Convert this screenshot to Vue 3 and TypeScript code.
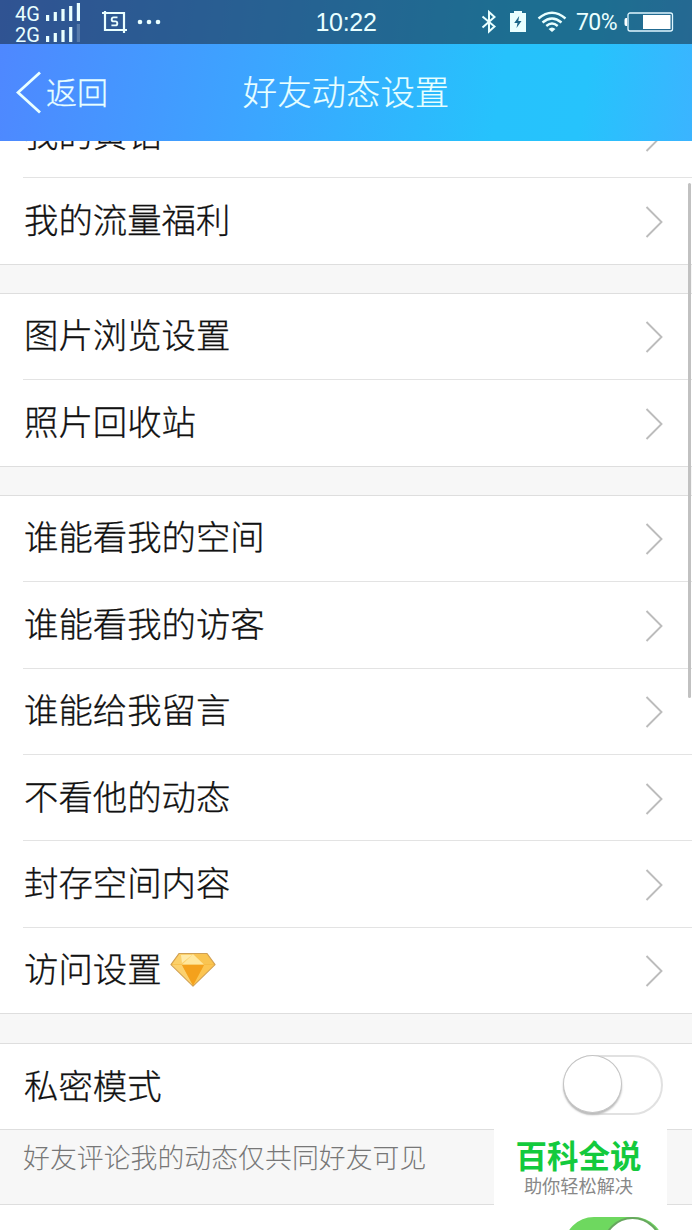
<script setup lang="ts">
interface Item { label: string; gem?: boolean }

const groups: Item[][] = [
  [{ label: '我的黄钻' }, { label: '我的流量福利' }],
  [{ label: '图片浏览设置' }, { label: '照片回收站' }],
  [
    { label: '谁能看我的空间' },
    { label: '谁能看我的访客' },
    { label: '谁能给我留言' },
    { label: '不看他的动态' },
    { label: '封存空间内容' },
    { label: '访问设置', gem: true },
  ],
]
const bars = [6, 9, 12, 15, 18]
</script>

<template>
  <div class="screen">
    <header class="top">
      <div class="status">
        <div class="networks">
          <div class="network">
            <span>4G</span>
            <svg width="35" height="19" viewBox="0 0 35 19"><rect v-for="(h, i) in bars" :key="h" :x="i * 7.7" :y="19 - h" width="3.2" :height="h" fill="#e9ffff" /></svg>
          </div>
          <div class="network">
            <span>2G</span>
            <svg width="35" height="19" viewBox="0 0 35 19"><rect v-for="(h, i) in bars" :key="h" :x="i * 7.7" :y="19 - h" width="3.2" :height="h" fill="#e9ffff" :opacity="i === 4 ? 0.22 : 1" /></svg>
          </div>
        </div>
        <svg class="shot" width="26" height="24" viewBox="0 0 26 24" fill="none" stroke="#e9ffff" stroke-width="2.2">
          <path d="M1 3H23V23M4 1V20H26" />
          <path d="M16.5 7.4H12.7Q10.7 7.4 10.7 9.4T12.7 11.4H14.4Q16.3 11.4 16.3 13.4T14.3 15.4H10.4" stroke-width="1.9" />
        </svg>
        <svg class="dots" width="24" height="6" viewBox="0 0 24 6" fill="#e9ffff"><circle cx="3" cy="3" r="2.3" /><circle cx="12" cy="3" r="2.3" /><circle cx="21" cy="3" r="2.3" /></svg>
        <span class="clock">10:22</span>
        <div class="indicators">
          <svg class="bt" width="16" height="26" viewBox="0 0 16 26" fill="none" stroke="#e9ffff" stroke-width="2"><path d="M1.5 7.5L13.5 17.5L8 22.5V3L13.5 8L1.5 18.5" /></svg>
          <svg class="charge" width="16" height="22" viewBox="0 0 16 22"><path d="M0 2H4V0H12V2H16V21H0Z" fill="#e9ffff" /><path d="M9.2 5L4.2 12H7.5L6.5 17L11.5 10H8.3Z" fill="#1c6688" /></svg>
          <svg class="wifi" width="30" height="22" viewBox="0 0 30 22" fill="none" stroke="#e9ffff" stroke-width="2.4"><path d="M1.5 7.5Q15-4 28.5 7.5M5.5 11.5Q15 3.5 24.5 11.5M9.3 15Q15 10.2 20.7 15" /><path d="M11.5 18Q15 15 18.5 18L15 21Z" fill="#e9ffff" stroke="none" /></svg>
          <span class="percent">70%</span>
          <svg class="battery" width="50" height="20" viewBox="0 0 50 20"><rect x="4" y="1" width="44.5" height="18" rx="2" fill="none" stroke="#dff6ff" stroke-width="1.3" /><path d="M3 6H2Q.5 6 .5 8V12Q.5 14 2 14H3Z" fill="#fff" /><rect x="19" y="3" width="27.5" height="14" fill="#fff" /></svg>
        </div>
      </div>
      <div class="nav">
        <svg class="back-arrow" width="26" height="43" viewBox="0 0 26 43"><path d="M24 1.5L2 21.5L24 41.5" fill="none" stroke="#e9ffff" stroke-width="2.8" /></svg>
        <span class="back">返回</span>
        <h1 class="title">好友动态设置</h1>
      </div>
    </header>

    <main class="content">
      <section v-for="(group, g) in groups" :key="g" class="group" :class="{ first: g === 0, second: g === 1 }">
        <div v-for="item in group" :key="item.label" class="row">
          <span class="label">{{ item.label }}</span>
          <svg v-if="item.gem" class="gem" width="46" height="36" viewBox="0 0 46 36">
            <path d="M9 1.5H37L45 12.5L23 34L1 12.5Z" fill="#f5b53a" stroke="#cfa055" stroke-width="1.2" stroke-linejoin="round" />
            <path d="M9.5 2L2 12.5H12L23 2Z" fill="#fbd06a" />
            <path d="M36.5 2L44 12.5H34L23 2Z" fill="#f9c451" />
            <path d="M23 2L12 12.5H34Z" fill="#ffe79d" />
            <path d="M11 3H22L12 11Z" fill="#ffeaa8" />
            <path d="M2 13L23 33.5L12 13Z" fill="#fbd16f" />
            <path d="M44 13L23 33.5L34 13Z" fill="#fcc552" />
            <path d="M12 13H34L23 33.5Z" fill="#f4a11c" />
          </svg>
          <svg class="chevron" width="19" height="34" viewBox="0 0 19 34"><path d="M1.5 2L16.5 17L1.5 32" fill="none" stroke="#bcbcbc" stroke-width="1.9" /></svg>
        </div>
      </section>
      <section class="group private">
        <div class="row">
          <span class="label">私密模式</span>
          <span class="switch"><i class="knob"></i></span>
        </div>
      </section>
      <p class="note">好友评论我的动态仅共同好友可见</p>
      <section class="group last">
        <div class="row">
          <span class="label">接收好友动态通知</span>
          <span class="switch on"><i class="knob"></i></span>
        </div>
      </section>
    </main>

    <i class="scrollbar"></i>
    <aside class="brand">
      <strong>百科全说</strong>
      <span>助你轻松解决</span>
    </aside>
  </div>
</template>

<style>
html, body { margin: 0; overflow: hidden; }
</style>

<style scoped>
.screen { position: relative; display: flex; flex-direction: column; width: 692px; height: 1230px; overflow: hidden; background: #f7f7f7; font-family: "Liberation Sans", "Noto Sans CJK SC", sans-serif; font-weight: 300; color: #111; }
svg { display: block; flex: none; }
.top { flex: none; height: 141px; background: linear-gradient(99deg, #4f87ff 0%, #3ba6ff 39%, #26c2fc 72%, #26c3fc 84%, #3bb4ff 100%); color: #e9ffff; }
.status { position: relative; display: flex; align-items: center; height: 44px; background: rgba(22, 38, 53, .54); }
.networks { width: 85px; height: 44px; padding-left: 15px; box-sizing: border-box; }
.network { display: flex; align-items: flex-end; gap: 7px; height: 21px; font: 20px/20px Roboto, "Liberation Sans", sans-serif; }
.network span { width: 24px; height: 17px; }
.shot { margin-left: 16px; }
.dots { margin-left: 10px; }
.clock { position: absolute; left: 0; right: 0; top: 8px; text-align: center; font: 25px/28px "Liberation Sans", sans-serif; letter-spacing: -.3px; }
.indicators { display: flex; align-items: center; margin-left: auto; padding-right: 18px; }
.charge { margin-left: 13px; }
.wifi { margin-left: 11px; }
.percent { width: 42px; margin: 2px 6px 0 9px; font: 400 23px/26px Roboto, sans-serif; letter-spacing: -.6px; white-space: nowrap; }
.nav { position: relative; display: flex; align-items: center; height: 97px; padding-left: 16px; }
.back { margin: 0 0 4px 4px; font: 300 31px/44px "Noto Sans CJK SC", sans-serif; -webkit-text-stroke: .3px currentColor; }
.title { position: absolute; left: 0; right: 0; top: 21px; margin: 0; text-align: center; font: 300 34.4px/50px "Noto Sans CJK SC", sans-serif; -webkit-text-stroke: .2px currentColor; pointer-events: none; }
.content { flex: 1; min-height: 0; overflow: hidden; }
.group { background: #fff; border: solid #dedede; border-width: 1px 0; margin-bottom: 29px; }
.group.first { margin-top: -50px; margin-bottom: 28px; }
.group.second { margin-bottom: 28.2px; }
.row { position: relative; display: flex; align-items: center; height: 86.4px; margin-left: 23px; padding-right: 28px; box-sizing: border-box; border-top: 1px solid #e3e3e3; }
.row:first-child { height: 85.4px; border-top: 0; }
.label { font: 300 34.4px/50px "Noto Sans CJK SC", sans-serif; margin: 0 0 6px 1px; white-space: nowrap; -webkit-text-stroke: .3px currentColor; }
.gem { margin: 0 0 1px 8px; }
.chevron { margin: 2px 0 0 auto; }
.private { margin-bottom: 0; }
.note { height: 74px; margin: 0; padding: 7px 0 0 23px; box-sizing: border-box; font: 300 26.9px/40px "Noto Sans CJK SC", sans-serif; color: #777; }
.last { margin: 0; }
.switch { position: relative; margin: -4px 0 0 auto; width: 100px; height: 60px; box-sizing: border-box; border: 2.5px solid #e1e1e1; border-radius: 30px; background: #fff; right: 1px; }
.knob { position: absolute; left: -2px; top: -2px; width: 59px; height: 58px; box-sizing: border-box; border: 1.5px solid #c4c4c4; border-radius: 50%; background: #fff; box-shadow: 0 2px 2px #bbb; }
.switch.on { border-color: #6ed85f; background: #6ed85f; margin-top: -2px; right: 0; }
.switch.on .knob { left: auto; right: 0; top: -2px; border: 2px solid #67a75e; }
.scrollbar { position: absolute; left: 687.5px; top: 183px; width: 3.5px; height: 515px; border-radius: 2px; background: #c1c1c1; }
.brand { position: absolute; left: 494px; top: 1128px; width: 173px; height: 78px; padding: 4px 4px 0 0; box-sizing: border-box; display: flex; flex-direction: column; align-items: center; background: #fff; }
.brand strong { font: 700 31.5px/44px "Noto Sans CJK SC", sans-serif; color: #13ca3d; }
.brand span { font: 400 18.2px/18px "Noto Sans CJK SC", sans-serif; color: #888; }
</style>
